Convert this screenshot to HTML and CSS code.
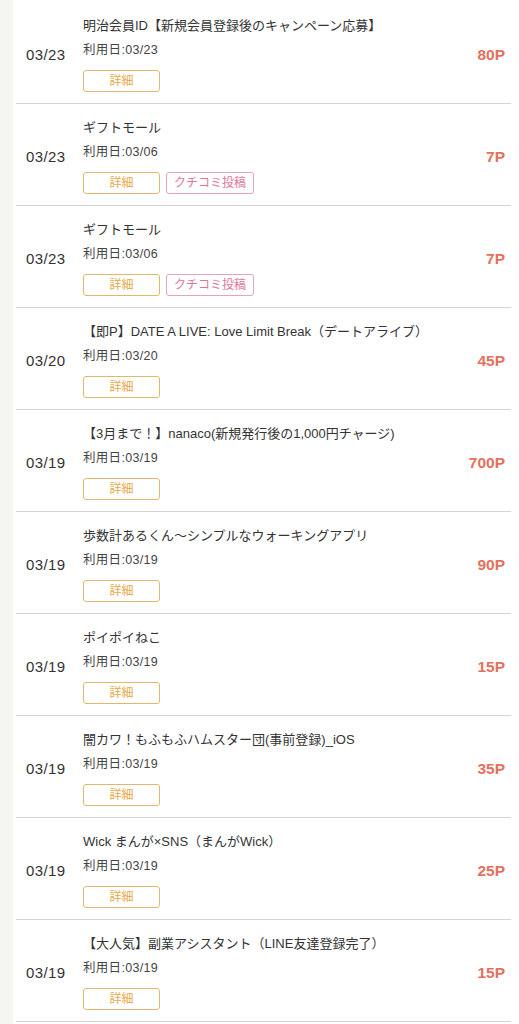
FILE: index.html
```html
<!DOCTYPE html>
<html>
<head>
    <meta charset="utf-8">
    <title>ポイント履歴</title>
    <link rel="stylesheet" href="styles.css">
</head>
<body>
    <div id="page">
        <div class="side"></div>
        <ul id="history">
            <li class="row">
                <div class="date">03/23</div>
                <div class="main">
                    <p class="title">明治会員ID【新規会員登録後のキャンペーン応募】</p>
                    <p class="used">利用日:03/23</p>
                    <div class="buttons"><span class="btn detail">詳細</span></div>
                </div>
                <div class="point">80P</div>
            </li>
            <li class="row">
                <div class="date">03/23</div>
                <div class="main">
                    <p class="title">ギフトモール</p>
                    <p class="used">利用日:03/06</p>
                    <div class="buttons"><span class="btn detail">詳細</span><span class="btn review">クチコミ投稿</span></div>
                </div>
                <div class="point">7P</div>
            </li>
            <li class="row">
                <div class="date">03/23</div>
                <div class="main">
                    <p class="title">ギフトモール</p>
                    <p class="used">利用日:03/06</p>
                    <div class="buttons"><span class="btn detail">詳細</span><span class="btn review">クチコミ投稿</span></div>
                </div>
                <div class="point">7P</div>
            </li>
            <li class="row">
                <div class="date">03/20</div>
                <div class="main">
                    <p class="title">【即P】DATE A LIVE: Love Limit Break（デートアライブ）</p>
                    <p class="used">利用日:03/20</p>
                    <div class="buttons"><span class="btn detail">詳細</span></div>
                </div>
                <div class="point">45P</div>
            </li>
            <li class="row">
                <div class="date">03/19</div>
                <div class="main">
                    <p class="title">【3月まで！】nanaco(新規発行後の1,000円チャージ)</p>
                    <p class="used">利用日:03/19</p>
                    <div class="buttons"><span class="btn detail">詳細</span></div>
                </div>
                <div class="point">700P</div>
            </li>
            <li class="row">
                <div class="date">03/19</div>
                <div class="main">
                    <p class="title">歩数計あるくん〜シンプルなウォーキングアプリ</p>
                    <p class="used">利用日:03/19</p>
                    <div class="buttons"><span class="btn detail">詳細</span></div>
                </div>
                <div class="point">90P</div>
            </li>
            <li class="row">
                <div class="date">03/19</div>
                <div class="main">
                    <p class="title">ポイポイねこ</p>
                    <p class="used">利用日:03/19</p>
                    <div class="buttons"><span class="btn detail">詳細</span></div>
                </div>
                <div class="point">15P</div>
            </li>
            <li class="row">
                <div class="date">03/19</div>
                <div class="main">
                    <p class="title">闇カワ！もふもふハムスター団(事前登録)_iOS</p>
                    <p class="used">利用日:03/19</p>
                    <div class="buttons"><span class="btn detail">詳細</span></div>
                </div>
                <div class="point">35P</div>
            </li>
            <li class="row">
                <div class="date">03/19</div>
                <div class="main">
                    <p class="title">Wick まんが×SNS（まんがWick）</p>
                    <p class="used">利用日:03/19</p>
                    <div class="buttons"><span class="btn detail">詳細</span></div>
                </div>
                <div class="point">25P</div>
            </li>
            <li class="row">
                <div class="date">03/19</div>
                <div class="main">
                    <p class="title">【大人気】副業アシスタント（LINE友達登録完了）</p>
                    <p class="used">利用日:03/19</p>
                    <div class="buttons"><span class="btn detail">詳細</span></div>
                </div>
                <div class="point">15P</div>
            </li>
        </ul>
    </div>
</body>
</html>
```

FILE: styles.css
```css
body {
    margin: 0;
    background-color: #fff;
    font-family: "Liberation Sans", "Noto Sans CJK JP", sans-serif;
    color: #333;
}

#page {
    display: flex;
    min-height: 1024px;
}

.side {
    width: 13px;
    flex-shrink: 0;
    background-color: #f5f5f2;
}

#history {
    flex: 1;
    list-style: none;
    margin: 0 8px 0 3px;
    padding: 2px 0 0;
}

.row {
    display: flex;
    align-items: center;
    padding: 15px 6px 11px 0;
    border-bottom: 1px solid #d4d4d4;
}

.date {
    width: 67px;
    flex-shrink: 0;
    box-sizing: border-box;
    padding-left: 10px;
    font-size: 15px;
    letter-spacing: 0.4px;
    color: #333;
}

.main {
    flex: 1;
    min-width: 0;
}

.title {
    margin: 0;
    font-size: 13px;
    line-height: 18px;
    color: #333;
    white-space: nowrap;
}

.used {
    margin: 6px 0 0;
    font-size: 12.5px;
    line-height: 18px;
    letter-spacing: 0.3px;
    color: #444;
}

.buttons {
    display: flex;
    gap: 6px;
    margin-top: 11px;
}

.btn {
    display: inline-block;
    box-sizing: border-box;
    height: 22px;
    line-height: 20px;
    border-radius: 3px;
    font-size: 12px;
    text-align: center;
    background-color: #fff;
}

.detail {
    width: 77px;
    border: 1px solid #e2b66c;
    color: #e6a848;
}

.review {
    width: 88px;
    border: 1px solid #e6a3bb;
    color: #e0779a;
}

.point {
    flex-shrink: 0;
    font-size: 15.5px;
    font-weight: bold;
    color: #e5705e;
}
```
